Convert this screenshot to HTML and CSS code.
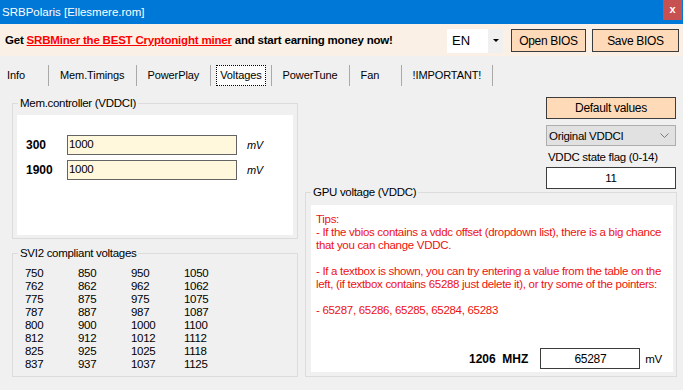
FILE: index.html
```html
<!DOCTYPE html>
<html lang="en">
<head>
  <meta charset="UTF-8" />
  <title>SRBPolaris [Ellesmere.rom]</title>
  <link rel="stylesheet" href="styles.css">
</head>
<body>

  <!-- Window title -->
  <div class="titlebar">
    <span class="title">SRBPolaris [Ellesmere.rom]</span>
    <span class="close">x</span>
  </div>

  <!-- Banner with language + file buttons -->
  <div class="banner">
    <p class="promo">Get <a href="#">SRBMiner the BEST Cryptonight miner</a> and start earning money now!</p>
    <div class="banner-tools">
      <div class="lang">
        <span class="lang-value">EN</span>
        <span class="lang-arrow"></span>
      </div>
      <button class="peach open-bios">Open BIOS</button>
      <button class="peach save-bios">Save BIOS</button>
    </div>
  </div>

  <!-- Tabs -->
  <div class="tabs">
    <span class="tab tab-first">Info</span>
    <span class="tab">Mem.Timings</span>
    <span class="tab">PowerPlay</span>
    <span class="tab tab-active"><span class="tab-focus">Voltages</span></span>
    <span class="tab">PowerTune</span>
    <span class="tab">Fan</span>
    <span class="tab">!IMPORTANT!</span>
  </div>

  <div class="content">
    <div class="col-left">
      <fieldset class="group group-vddci">
        <legend>Mem.controller (VDDCI)</legend>
        <div class="panel vddci-panel">
          <div class="volt-row">
            <span class="volt-label">300</span>
            <input class="volt-input" type="text" value="1000">
            <span class="unit">mV</span>
          </div>
          <div class="volt-row">
            <span class="volt-label">1900</span>
            <input class="volt-input" type="text" value="1000">
            <span class="unit">mV</span>
          </div>
        </div>
      </fieldset>

      <fieldset class="group group-svi2">
        <legend>SVI2 compliant voltages</legend>
        <div class="svi2-grid" id="svi2"></div>
      </fieldset>
    </div>

    <div class="col-right">
      <div class="state-tools">
        <button class="peach default-btn">Default values</button>
        <div class="combo">
          <span>Original VDDCI</span>
          <svg class="chevron" width="9" height="6" viewBox="0 0 9 6"><path d="M0.5 0.5 L4.5 4.5 L8.5 0.5" fill="none" stroke="#7a7a7a" stroke-width="1"/></svg>
        </div>
        <div class="flag-label">VDDC state flag (0-14)</div>
        <input class="flag-input" type="text" value="11">
      </div>

      <fieldset class="group group-vddc">
        <legend>GPU voltage (VDDC)</legend>
        <div class="panel vddc-panel">
          <p class="tips">
            Tips:<br>
            - If the vbios contains a vddc offset (dropdown list), there is a big chance<br>
            that you can change VDDC.<br>
            <br>
            - If a textbox is shown, you can try entering a value from the table on the<br>
            left, (if textbox contains 65288 just delete it), or try some of the pointers:<br>
            <br>
            - 65287, 65286, 65285, 65284, 65283
          </p>
          <div class="clock-row">
            <span class="clock">1206&nbsp; MHZ</span>
            <input class="clock-input" type="text" value="65287">
            <span class="clock-unit">mV</span>
          </div>
        </div>
      </fieldset>
    </div>
  </div>

  <script>
    // SVI2 table, filled column by column
    const columns = [
      [750, 762, 775, 787, 800, 812, 825, 837],
      [850, 862, 875, 887, 900, 912, 925, 937],
      [950, 962, 975, 987, 1000, 1012, 1025, 1037],
      [1050, 1062, 1075, 1087, 1100, 1112, 1118, 1125]
    ];

    const grid = document.getElementById("svi2");
    for (let row = 0; row < 8; row++) {
      columns.forEach(col => {
        const cell = document.createElement("span");
        cell.textContent = col[row];
        grid.appendChild(cell);
      });
    }
  </script>

</body>
</html>
```

FILE: styles.css
```css
body {
  margin: 0;
  width: 683px;
  height: 390px;
  overflow: hidden;
  background: #f0f0f0;
  font-family: "Liberation Sans", Arial, sans-serif;
  font-size: 11px;
  letter-spacing: -0.3px;
  color: #000;
}
button, input {
  font-family: inherit;
  font-size: inherit;
  letter-spacing: inherit;
  color: inherit;
}

/* title bar */
.titlebar {
  height: 24px;
  background: #0078d7;
  display: flex;
  justify-content: space-between;
  align-items: flex-start;
}
.title {
  color: white;
  line-height: 24px;
  padding-left: 2px;
  font-size: 11.5px;
  letter-spacing: 0;
}
.close {
  width: 19px;
  height: 20px;
  margin-right: 1px;
  background: #c75050;
  color: white;
  font-weight: bold;
  font-size: 11px;
  line-height: 18px;
  text-align: center;
  letter-spacing: 0;
}

/* banner */
.banner {
  height: 32px;
  background: #faf0e6;
  display: flex;
  align-items: center;
  padding: 0 4px 0 5px;
}
.promo {
  margin: 0;
  font-weight: bold;
  font-size: 11.5px;
  letter-spacing: -0.2px;
}
.promo a {
  color: #ff0000;
  text-decoration: underline;
}
.banner-tools {
  margin-left: auto;
  display: flex;
  align-items: center;
  padding-top: 1px;
}
.lang {
  width: 56px;
  height: 24px;
  background: white;
  display: flex;
  align-items: stretch;
}
.lang-value {
  flex: 1;
  padding-left: 5px;
  line-height: 24px;
  font-size: 13px;
  letter-spacing: 0;
}
.lang-arrow {
  width: 15px;
  background: #f0f0f0;
  position: relative;
}
.lang-arrow::after {
  content: "";
  position: absolute;
  left: 5px;
  top: 10px;
  border-left: 3px solid transparent;
  border-right: 3px solid transparent;
  border-top: 3px solid #000;
}
.peach {
  background: #ffdab9;
  border: 1px solid #3c3c3c;
  padding: 0;
  height: 23px;
  font-size: 12px;
  cursor: pointer;
}
.open-bios {
  width: 75px;
  margin-left: 8px;
}
.save-bios {
  width: 87px;
  margin-left: 6px;
}

/* tabs */
.tabs {
  display: flex;
  height: 21px;
  padding: 9px 0 10px;
  letter-spacing: -0.1px;
}
.tab {
  min-width: 52px;
  box-sizing: border-box;
  padding: 0 11px;
  border-right: 1px solid #a9a9a9;
  line-height: 20px;
}
.tab-first {
  min-width: 49px;
  padding-left: 7px;
}
.tab-active {
  padding: 0 5px;
}
.tab-focus {
  display: block;
  height: 19px;
  line-height: 19px;
  padding: 0 3px;
  border: 1px dotted #000;
  background: #fbfbfb;
}

/* content */
.content {
  display: flex;
  gap: 7px;
  height: 281px;
  padding: 0 6px 0 12px;
}
.col-left {
  width: 286px;
  display: flex;
  flex-direction: column;
}
.col-right {
  flex: 1;
  display: flex;
  flex-direction: column;
}

.group {
  margin: 0;
  border: 1px solid #dcdcdc;
  min-width: 0;
}
.group legend {
  padding: 0 2px;
  line-height: 14px;
  font-size: 11.5px;
}
.panel {
  background: white;
}

.group-vddci {
  padding: 5px 4px 3px;
}
.group-vddci legend {
  margin-left: 1px;
}
.vddci-panel {
  height: 120px;
  box-sizing: border-box;
  padding: 20px 0 0 9px;
}
.volt-row {
  display: flex;
  align-items: center;
  margin-bottom: 5px;
}
.volt-label {
  width: 41px;
  font-weight: bold;
  font-size: 12px;
  letter-spacing: 0;
}
.volt-input {
  width: 170px;
  height: 20px;
  box-sizing: border-box;
  border: 1px solid #646464;
  background: #fff8dc;
  padding: 0 1px 2px;
  font-size: 11.5px;
}
.unit {
  margin-left: 10px;
  font-style: italic;
  font-size: 11px;
}

.group-svi2 {
  flex: 1;
  margin-top: 7px;
  padding: 7px 0 0 12px;
}
.group-svi2 legend {
  margin-left: -7px;
}
.svi2-grid {
  display: grid;
  grid-template-columns: repeat(4, 53px);
  line-height: 13px;
  font-size: 11.5px;
}

/* right column */
.state-tools {
  width: 130px;
  margin-left: auto;
  margin-right: 1px;
  padding-top: 1px;
  display: flex;
  flex-direction: column;
  font-size: 11.5px;
}
.default-btn {
  height: 22px;
}
.combo {
  margin-top: 6px;
  height: 21px;
  box-sizing: border-box;
  border: 1px solid #adadad;
  background: #e1e1e1;
  display: flex;
  align-items: center;
  justify-content: space-between;
  padding: 0 6px 0 2px;
}
.flag-label {
  margin-top: 5px;
  line-height: 13px;
  padding-left: 2px;
}
.flag-input {
  margin-top: 3px;
  height: 22px;
  box-sizing: border-box;
  border: 1px solid #3c3c3c;
  background: white;
  text-align: center;
  padding: 0;
}

.group-vddc {
  flex: 1;
  margin-top: -4px;
  padding: 6px 3px 4px 5px;
  display: flex;
  flex-direction: column;
}
.vddc-panel {
  flex: 1;
  display: flex;
  flex-direction: column;
  padding: 8px 0 3px 5px;
}
.tips {
  margin: 0;
  color: #ee1111;
  line-height: 13px;
  font-size: 11.5px;
  white-space: nowrap;
}
.clock-row {
  margin-top: auto;
  display: flex;
  align-items: center;
  justify-content: flex-end;
  padding-right: 11px;
}
.clock {
  font-weight: bold;
  font-size: 12px;
  letter-spacing: 0;
  margin-right: 12px;
}
.clock-input {
  width: 100px;
  height: 21px;
  box-sizing: border-box;
  border: 1px solid #3c3c3c;
  text-align: center;
  padding: 0;
  font-size: 12px;
}
.clock-unit {
  margin-left: 5px;
  font-size: 11.5px;
}
```
